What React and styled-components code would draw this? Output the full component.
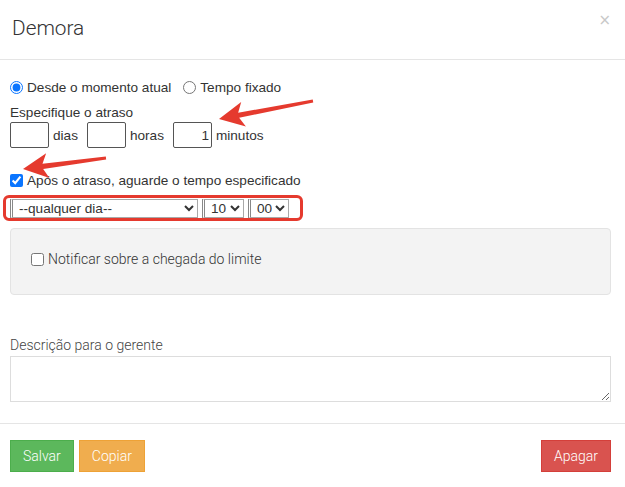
import React from "react";
import styled, { createGlobalStyle } from "styled-components";

const Global = createGlobalStyle`
  html, body { margin: 0; padding: 0; background: #fff; }
  body { font-family: "Liberation Sans", Arial, sans-serif; font-size: 14px; color: #333; }
  * { box-sizing: border-box; }
`;

const Modal = styled.div`
  position: relative;
  width: 625px;
  height: 487px;
  background: #fff;
  overflow: hidden;
`;

const Header = styled.div`
  height: 60px;
  border-bottom: 1px solid #e5e5e5;
  display: flex;
  align-items: center;
  justify-content: space-between;
  padding: 0 14px 4px 12px;
`;

const Title = styled.h4`
  margin: 0;
  font-family: Roboto, "Liberation Sans", sans-serif;
  font-weight: 300;
  font-size: 20.8px;
  color: #333;
`;

const Close = styled.span`
  font-family: "DejaVu Sans", sans-serif;
  font-size: 15px;
  color: #c8c8c8;
  margin-top: -16px;
`;

const Body = styled.div`
  padding: 17px 14px 0 10px;
`;

const Row = styled.div`
  display: flex;
  align-items: center;
  height: 20px;
  margin-top: ${(p) => p.$mt || 0}px;
`;

const Radio = styled.input.attrs({ type: "radio" })`
  width: 13px;
  height: 13px;
  margin: 0 4px 0 ${(p) => p.$ml || 0}px;
  accent-color: #0a75ff;
`;

const Check = styled.input.attrs({ type: "checkbox" })`
  width: 13px;
  height: 13px;
  margin: 0 4px 0 0;
  accent-color: #0a75ff;
`;

const Text = styled.span`
  font-family: ${(p) => (p.$alt ? 'Roboto, "Liberation Sans", sans-serif' : '"Liberation Sans", Arial, sans-serif')};
  font-weight: ${(p) => (p.$alt ? 300 : 400)};
  font-size: ${(p) => p.$fs || 13.6}px;
  color: ${(p) => p.$color || "#333"};
  margin-right: ${(p) => p.$mr || 0}px;
  white-space: nowrap;
`;

const DelayRow = styled.div`
  display: flex;
  align-items: center;
  height: 26px;
`;

const NumBox = styled.input`
  width: 39px;
  height: 26px;
  border: 1px solid #555;
  border-radius: 2px;
  margin: 0 4px 0 0;
  padding: 0 2px;
  text-align: right;
  font-family: "Liberation Sans", Arial, sans-serif;
  font-size: 13.6px;
  color: #333;
`;

const Highlight = styled.div`
  display: inline-flex;
  align-items: center;
  gap: 4px;
  margin: 5px 0 0 -7px;
  padding: 0 11px 0 4px;
  height: 26px;
  border: 3px solid #e53a2e;
  border-radius: 6px;
`;

const Select = styled.select`
  width: ${(p) => p.$w}px;
  height: 19px;
  font-family: "Liberation Sans", Arial, sans-serif;
  font-size: 13.6px;
  color: #333;
  border: 1px solid #a9a9a9;
  border-left: 3px double #888;
  border-radius: 0;
  padding: 0 0 0 2px;
  background: #fff;
`;

const Well = styled.div`
  margin-top: 7px;
  height: 67px;
  background: #f3f3f3;
  border: 1px solid #e3e3e3;
  border-radius: 4px;
  padding: 20px 20px 0 20px;
`;

const FieldLabel = styled.div`
  margin-top: 40px;
  height: 20px;
  line-height: 20px;
  font-family: Roboto, "Liberation Sans", sans-serif;
  font-weight: 300;
  font-size: 14px;
  color: #444;
`;

const TextArea = styled.textarea`
  display: block;
  width: 601px;
  height: 46px;
  margin-top: 1px;
  border: 1px solid #ddd;
  border-radius: 0;
  resize: vertical;
`;

const Footer = styled.div`
  margin-top: 21px;
  border-top: 1px solid #e5e5e5;
  padding: 16px 14px 0 10px;
  display: flex;
  align-items: center;
  gap: 5px;
`;

const Btn = styled.button`
  height: 32px;
  padding: 0 ${(p) => p.$px || 12}px;
  border: 1px solid ${(p) => p.$border};
  background: ${(p) => p.$bg};
  color: #fff;
  font-family: Roboto, "Liberation Sans", sans-serif;
  font-weight: 300;
  font-size: 14px;
  border-radius: 0;
  margin-left: ${(p) => (p.$push ? "auto" : "0")};
`;

const Overlay = styled.svg`
  position: absolute;
  left: 0;
  top: 0;
  pointer-events: none;
`;

const Arrow = ({ tip, tail }) => {
  const dx = tail[0] - tip[0];
  const dy = tail[1] - tip[1];
  const L = Math.sqrt(dx * dx + dy * dy);
  const ang = (Math.atan2(dy, dx) * 180) / Math.PI;
  return (
    <polygon
      transform={`translate(${tip[0]} ${tip[1]}) rotate(${ang})`}
      points={`0,0 25,-12.5 20,-2.6 ${L},-1.4 ${L},1.4 20,2.6 25,12.5`}
      fill="#e53a2e"
    />
  );
};

export default function App() {
  return (
    <>
      <Global />
      <Modal>
        <Header>
          <Title>Demora</Title>
          <Close>×</Close>
        </Header>
        <Body>
          <Row>
            <Radio name="mode" defaultChecked />
            <Text $mr={12}>Desde o momento atual</Text>
            <Radio name="mode" />
            <Text>Tempo fixado</Text>
          </Row>
          <Row $mt={5}>
            <Text>Especifique o atraso</Text>
          </Row>
          <DelayRow>
            <NumBox defaultValue="" />
            <Text $mr={9}>dias</Text>
            <NumBox defaultValue="" />
            <Text $mr={9}>horas</Text>
            <NumBox defaultValue="1" />
            <Text>minutos</Text>
          </DelayRow>
          <Row $mt={22}>
            <Check defaultChecked />
            <Text>Após o atraso, aguarde o tempo especificado</Text>
          </Row>
          <Highlight>
            <Select $w={188} defaultValue="any">
              <option value="any">--qualquer dia--</option>
            </Select>
            <Select $w={42} defaultValue="10">
              <option value="10">10</option>
            </Select>
            <Select $w={41} defaultValue="00">
              <option value="00">00</option>
            </Select>
          </Highlight>
          <Well>
            <Row>
              <Check />
              <Text $alt $fs={14}>Notificar sobre a chegada do limite</Text>
            </Row>
          </Well>
          <FieldLabel>Descrição para o gerente</FieldLabel>
          <TextArea />
        </Body>
        <Footer>
          <Btn $bg="#5cb85c" $border="#4cae4c">Salvar</Btn>
          <Btn $bg="#f0ad4e" $border="#eea236">Copiar</Btn>
          <Btn $bg="#d9534f" $border="#d43f3a" $push>Apagar</Btn>
        </Footer>
        <Overlay width="625" height="487" viewBox="0 0 625 487">
          <Arrow tip={[219, 119]} tail={[313, 101]} />
          <Arrow tip={[23, 169]} tail={[106, 158]} />
        </Overlay>
      </Modal>
    </>
  );
}
